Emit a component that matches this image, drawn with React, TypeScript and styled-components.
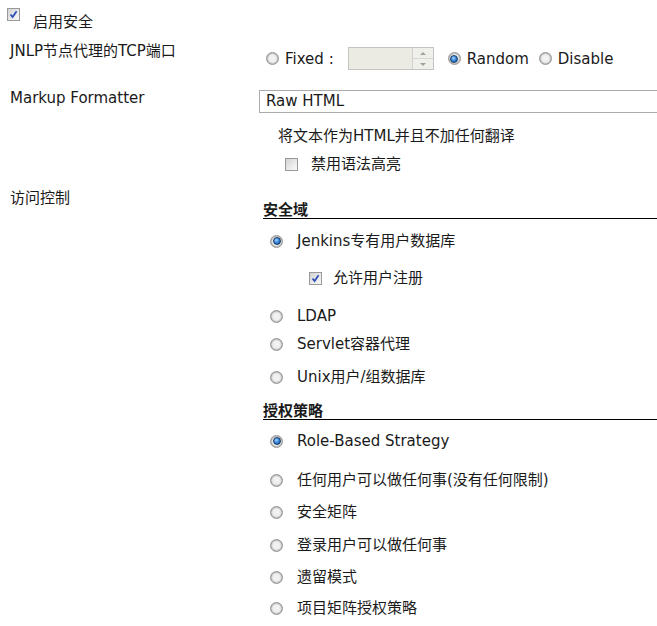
import React from "react";
import styled, { createGlobalStyle } from "styled-components";

const GlobalStyle = createGlobalStyle`
  html, body {
    margin: 0;
    padding: 0;
    background: #ffffff;
  }
  body {
    font-family: "DejaVu Sans", "Noto Sans CJK SC", sans-serif;
    font-size: 15px;
    line-height: 18px;
    color: #1a1a1a;
  }
`;

const Page = styled.div`
  width: 657px;
  height: 626px;
  overflow: hidden;
`;

const TopLine = styled.div`
  display: flex;
  align-items: flex-start;
  height: 36px;
  padding-left: 7px;
`;

const Row = styled.div<{ $top?: number }>`
  display: flex;
  align-items: flex-start;
  margin-top: ${({ $top }) => $top ?? 0}px;
`;

const Label = styled.div<{ $pad: number }>`
  width: 249px;
  flex: none;
  padding-left: 10px;
  padding-top: ${({ $pad }) => $pad}px;
  white-space: nowrap;
`;

const Field = styled.div<{ $pad?: number }>`
  flex: 1;
  min-width: 0;
  padding-top: ${({ $pad }) => $pad ?? 0}px;
`;

const Inline = styled.div`
  display: flex;
  align-items: center;
  height: 23px;
  padding-left: 7px;
  white-space: nowrap;
`;

const Box = styled.span<{ $checked?: boolean }>`
  display: inline-flex;
  align-items: center;
  justify-content: center;
  box-sizing: border-box;
  width: 13px;
  height: 13px;
  flex: none;
  border: 1px solid #999999;
  background: linear-gradient(135deg, #d2d2d2 0%, #ebebeb 60%, #f8f8f8 100%);
  svg {
    display: ${({ $checked }) => ($checked ? "block" : "none")};
  }
`;

const Radio = styled.span<{ $checked?: boolean }>`
  position: relative;
  display: inline-block;
  box-sizing: border-box;
  width: 13px;
  height: 13px;
  flex: none;
  border-radius: 50%;
  border: 1px solid #969696;
  background: radial-gradient(circle at 50% 50%, #f4f4f4 0%, #eeeeee 48%, #b6b6b6 70%, #dcdcdc 100%);
  &::after {
    content: "";
    display: ${({ $checked }) => ($checked ? "block" : "none")};
    position: absolute;
    left: 1.5px;
    top: 1.5px;
    width: 8px;
    height: 8px;
    box-sizing: border-box;
    border-radius: 50%;
    border: 1px solid #173a66;
    background: radial-gradient(circle at 40% 35%, #a8d6ff 0%, #3a8ae0 45%, #1a4f96 100%);
  }
`;

const Opt = styled.span`
  margin-left: 6px;
  margin-right: 10px;
`;

const Spin = styled.span`
  display: inline-flex;
  box-sizing: border-box;
  width: 86px;
  height: 23px;
  margin-left: 4px;
  margin-right: 14px;
  border: 1px solid #c4c4c4;
  background: #ebebe4;
  justify-content: flex-end;
`;

const SpinBtns = styled.span`
  display: flex;
  flex-direction: column;
  width: 20px;
  border-left: 1px solid #d0d0d0;
  background: #f0f0ea;
`;

const SpinBtn = styled.span<{ $down?: boolean }>`
  flex: 1;
  display: flex;
  align-items: center;
  justify-content: center;
  border-bottom: ${({ $down }) => ($down ? "none" : "1px solid #d6d6d6")};
  &::before {
    content: "";
    border-left: 3px solid transparent;
    border-right: 3px solid transparent;
    ${({ $down }) =>
      $down ? "border-top: 3px solid #a0a0a0;" : "border-bottom: 3px solid #a0a0a0;"}
  }
`;

const Select = styled.div`
  box-sizing: border-box;
  height: 23px;
  width: 420px;
  margin-top: 10px;
  padding-left: 6px;
  border: 1px solid #ababab;
  border-right: none;
  background: #ffffff;
  line-height: 21px;
`;

const Note = styled.div`
  padding-left: 19px;
  margin-top: 14px;
`;

const CheckRow = styled.div<{ $left: number; $gap: number; $top: number }>`
  display: flex;
  align-items: center;
  margin-top: ${({ $top }) => $top}px;
  padding-left: ${({ $left }) => $left}px;
  ${Box} {
    margin-right: ${({ $gap }) => $gap}px;
  }
`;

const Section = styled.div<{ $top: number }>`
  margin-top: ${({ $top }) => $top}px;
  margin-left: 4px;
  border-bottom: 1px solid #000000;
  font-weight: bold;
  line-height: 16px;
`;

const Choice = styled.div<{ $top: number }>`
  display: flex;
  align-items: center;
  height: 18px;
  margin-top: ${({ $top }) => $top}px;
  padding-left: 11px;
  ${Radio} {
    margin-right: 14px;
  }
`;

const Check = () => (
  <svg width="9" height="9" viewBox="0 0 9 9">
    <path d="M1.5 4.5 L3.6 7 L7.6 1.3" fill="none" stroke="#2f4fb8" strokeWidth="1.8" />
  </svg>
);

const otherRealms = [
  { text: "LDAP", top: 20 },
  { text: "Servlet容器代理", top: 10 },
  { text: "Unix用户/组数据库", top: 15 },
];

const strategies = [
  { text: "Role-Based Strategy", top: 12, on: true },
  { text: "任何用户可以做任何事(没有任何限制)", top: 21 },
  { text: "安全矩阵", top: 14 },
  { text: "登录用户可以做任何事", top: 15 },
  { text: "遗留模式", top: 14 },
  { text: "项目矩阵授权策略", top: 13 },
];

export default function App() {
  return (
    <Page>
      <GlobalStyle />
      <TopLine>
        <Box $checked style={{ marginTop: 8 }}>
          <Check />
        </Box>
        <span style={{ marginLeft: 13, marginTop: 13 }}>启用安全</span>
      </TopLine>

      <Row>
        <Label $pad={6}>JNLP节点代理的TCP端口</Label>
        <Field $pad={11}>
          <Inline>
            <Radio />
            <Opt>Fixed :</Opt>
            <Spin>
              <SpinBtns>
                <SpinBtn />
                <SpinBtn $down />
              </SpinBtns>
            </Spin>
            <Radio $checked />
            <Opt>Random</Opt>
            <Radio />
            <Opt>Disable</Opt>
          </Inline>
        </Field>
      </Row>

      <Row $top={10}>
        <Label $pad={9}>Markup Formatter</Label>
        <Field>
          <Select>Raw HTML</Select>
          <Note>将文本作为HTML并且不加任何翻译</Note>
          <CheckRow $left={26} $gap={13} $top={10}>
            <Box />
            <span>禁用语法高亮</span>
          </CheckRow>
        </Field>
      </Row>

      <Row $top={8}>
        <Label $pad={8}>访问控制</Label>
        <Field>
          <Section $top={21}>安全域</Section>
          <Choice $top={13}>
            <Radio $checked />
            <span>Jenkins专有用户数据库</span>
          </Choice>
          <CheckRow $left={50} $gap={11} $top={19}>
            <Box $checked>
              <Check />
            </Box>
            <span>允许用户注册</span>
          </CheckRow>
          {otherRealms.map((r) => (
            <Choice key={r.text} $top={r.top}>
              <Radio />
              <span>{r.text}</span>
            </Choice>
          ))}
          <Section $top={17}>授权策略</Section>
          {strategies.map((s) => (
            <Choice key={s.text} $top={s.top}>
              <Radio $checked={s.on} />
              <span>{s.text}</span>
            </Choice>
          ))}
        </Field>
      </Row>
    </Page>
  );
}
